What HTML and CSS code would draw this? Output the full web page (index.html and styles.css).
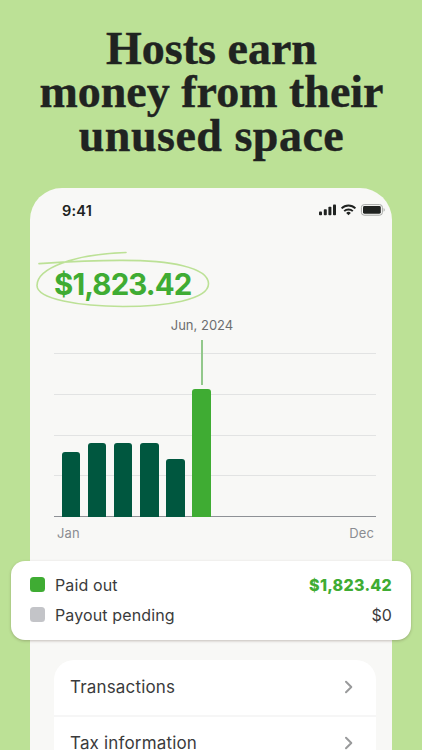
FILE: index.html
```html
<!DOCTYPE html>
<html lang="en">
<head>
    <meta charset="UTF-8">
    <meta name="viewport" content="width=device-width, initial-scale=1.0">
    <title>Hosts earn money from their unused space</title>
    <link rel="stylesheet" href="styles.css">
</head>
<body>
    <h1 class="headline">
        <span class="line line-1">Hosts earn</span>
        <span class="line line-2">money from their</span>
        <span class="line line-3">unused space</span>
    </h1>

    <main class="phone">
        <div class="status-bar">
            <span class="time">9:41</span>
            <svg class="status-icons" width="67" height="12" viewBox="0 0 67 12">
                <g fill="#202321">
                    <rect x="0" y="7.4" width="3" height="3.8" rx="0.8"/>
                    <rect x="4.8" y="5.2" width="3" height="6" rx="0.8"/>
                    <rect x="9.4" y="2.8" width="3" height="8.4" rx="0.8"/>
                    <rect x="14" y="0.4" width="3" height="10.8" rx="0.8"/>
                </g>
                <g fill="none" stroke="#202321" stroke-width="1.9">
                    <path d="M22.6 4.4a9.7 9.7 0 0 1 13.8 0"/>
                    <path d="M25.2 7.2a6.1 6.1 0 0 1 8.6 0"/>
                </g>
                <path d="M29.5 11.2l-2.3-2.3a3.3 3.3 0 0 1 4.6 0z" fill="#202321"/>
                <rect x="42.4" y="0.6" width="21" height="10.6" rx="2.8" fill="none" stroke="#a6a8a6"/>
                <rect x="44" y="2.1" width="17.8" height="7.6" rx="1.4" fill="#202321"/>
                <path d="M64.6 4.1v3.6a2 2 0 0 0 0-3.6z" fill="#a6a8a6"/>
            </svg>
        </div>

        <div class="amount">
            $1,823.42
            <svg class="scribble" width="176" height="58" viewBox="0 0 176 58" fill="none" stroke="#bce196" stroke-width="1.6" stroke-linecap="round">
                <path d="M4 13.6C30 12 58 10.5 85 10.4C135 10.2 173 17 173.5 33.5C174 50 130 56.5 88 56.5C44 56.5 2 49 2 35.5C2 18 40 4 91 2.5"/>
            </svg>
        </div>

        <section class="chart">
            <div class="chart-label">Jun, 2024</div>
            <div class="plot">
                <div class="grid-row"></div>
                <div class="grid-row"></div>
                <div class="grid-row"></div>
                <div class="grid-row"></div>
                <div class="bars">
                    <div class="bar" style="height: 65px"></div>
                    <div class="bar" style="height: 74px"></div>
                    <div class="bar" style="height: 74px"></div>
                    <div class="bar" style="height: 74px"></div>
                    <div class="bar" style="height: 58px"></div>
                    <div class="bar active" style="height: 128px"></div>
                </div>
            </div>
            <div class="axis">
                <span>Jan</span>
                <span>Dec</span>
            </div>
        </section>

        <section class="summary">
            <div class="summary-row">
                <span class="swatch paid"></span>
                <span class="summary-name">Paid out</span>
                <span class="summary-value total">$1,823.42</span>
            </div>
            <div class="summary-row">
                <span class="swatch pending"></span>
                <span class="summary-name">Payout pending</span>
                <span class="summary-value">$0</span>
            </div>
        </section>

        <nav class="menu">
            <div class="menu-item">
                <span>Transactions</span>
                <svg class="chevron" width="10" height="14" viewBox="0 0 10 14"><path d="M2 1.7L7.3 7L2 12.3"/></svg>
            </div>
            <div class="menu-item">
                <span>Tax information</span>
                <svg class="chevron" width="10" height="14" viewBox="0 0 10 14"><path d="M2 1.7L7.3 7L2 12.3"/></svg>
            </div>
        </nav>
    </main>
</body>
</html>
```
FILE: styles.css
```css
* {
    margin: 0;
    padding: 0;
    box-sizing: border-box;
}

body {
    height: 750px;
    overflow: hidden;
    background-color: #bce196;
    color: #3a3b3c;
    font-family: Inter, "Liberation Sans", sans-serif;
}

.headline {
    height: 187.5px;
    padding: 27px 0 0 1px;
    color: #202321;
    font-family: "Liberation Serif", serif;
    font-size: 46px;
    font-weight: 700;
    line-height: 43.3px;
    text-align: center;
    white-space: nowrap;
    -webkit-text-stroke: 0.4px #202321;
}

.line {
    display: block;
}

.line-3 {
    letter-spacing: 0.5px;
}

.phone {
    width: 361.5px;
    height: 562.5px;
    margin-left: 30px;
    padding: 0 0 0 24px;
    background-color: #f8f8f6;
    border-radius: 32px 32px 0 0;
}

.status-bar {
    display: flex;
    justify-content: space-between;
    align-items: center;
    height: 45px;
    padding: 0 5.5px 0 8px;
}

.time {
    color: #202321;
    font-size: 14.5px;
    font-weight: 600;
    letter-spacing: 0.2px;
}

.amount {
    position: relative;
    width: 150px;
    margin-top: 33.5px;
    color: #3fac33;
    font-size: 29.5px;
    font-weight: 700;
    line-height: 36px;
    letter-spacing: -0.9px;
}

.scribble {
    position: absolute;
    top: -16px;
    left: -19px;
}

.chart {
    width: 322px;
    margin-top: 15px;
}

.chart-label {
    width: 296px;
    height: 36px;
    color: #6c6e70;
    font-size: 13px;
    line-height: 17px;
    text-align: center;
}

.plot {
    position: relative;
    border-bottom: 1px solid #8e9196;
}

.grid-row {
    height: 40.75px;
    border-top: 1px solid #e2e3e3;
}

.bars {
    position: absolute;
    left: 7.5px;
    bottom: -1px;
    display: flex;
    align-items: flex-end;
    gap: 7.7px;
}

.bar {
    position: relative;
    width: 18.5px;
    background-color: #00573f;
    border-radius: 3px 3px 0 0;
}

.bar.active {
    background-color: #3fac33;
}

.bar.active::before {
    content: "";
    position: absolute;
    left: 8.5px;
    bottom: calc(100% + 4px);
    width: 2px;
    height: 45px;
    background-color: #92c88b;
}

.axis {
    display: flex;
    justify-content: space-between;
    padding: 8px 2px 0 3px;
    color: #8a8c91;
    font-size: 13px;
    line-height: 16px;
    letter-spacing: 0.1px;
}

.summary {
    display: flex;
    flex-direction: column;
    gap: 6px;
    width: 400px;
    height: 79px;
    margin: 19.5px 0 0 -43px;
    padding: 12.3px 19px 0;
    background-color: #fff;
    border-radius: 14px;
    box-shadow: 0 1px 3px rgba(60, 40, 30, 0.28);
}

.summary-row {
    display: flex;
    align-items: center;
    height: 24px;
    font-size: 16px;
    letter-spacing: 0.12px;
}

.swatch {
    width: 15px;
    height: 15px;
    margin-right: 10px;
    border-radius: 3.5px;
}

.swatch.paid {
    background-color: #3fac33;
}

.swatch.pending {
    background-color: #c3c4c8;
}

.summary-value {
    margin-left: auto;
}

.summary-value.total {
    color: #3fac33;
    font-weight: 800;
    letter-spacing: 0.25px;
}

.menu {
    width: 322px;
    height: 90.5px;
    margin-top: 20px;
    overflow: hidden;
    background-color: #fff;
    border-radius: 20px 20px 0 0;
}

.menu-item {
    display: flex;
    justify-content: space-between;
    align-items: center;
    height: 55px;
    padding: 0 22px 0 16px;
    font-size: 17px;
    letter-spacing: 0.17px;
}

.menu-item + .menu-item {
    border-top: 2px solid #f6f6f6;
}

.chevron {
    fill: none;
    stroke: #9a9b9c;
    stroke-width: 2;
    stroke-linecap: round;
    stroke-linejoin: round;
}
```
